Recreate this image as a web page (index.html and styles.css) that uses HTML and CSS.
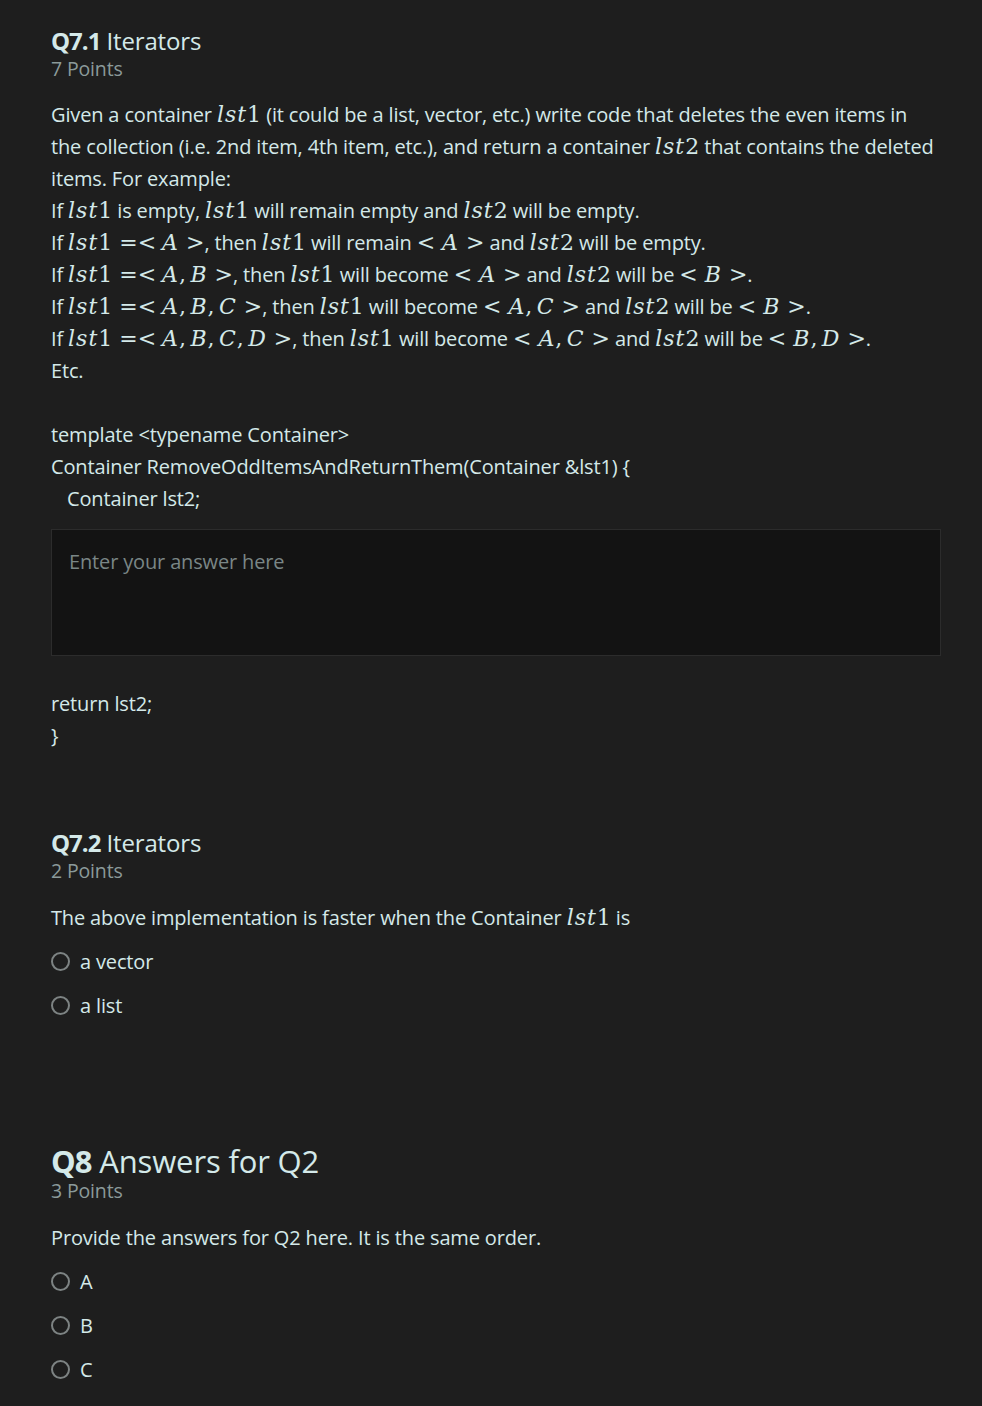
FILE: index.html
```html
<!DOCTYPE html>
<html>
<head>
<meta charset="utf-8">
<link rel="stylesheet" href="styles.css">
</head>
<body>
<main class="page">
  <section class="q q71">
    <h2 class="qtitle"><b>Q7.1</b> Iterators</h2>
    <div class="points">7 Points</div>
    <div class="body">
      <p class="line">Given a container <span class="m"><i>lst</i>1</span> (it could be a list, vector, etc.) write code that deletes the even items in the collection (i.e. 2nd item, 4th item, etc.), and return a container <span class="m"><i>lst</i>2</span> that contains the deleted items. For example:<br>
      If <span class="m"><i>lst</i>1</span> is empty, <span class="m"><i>lst</i>1</span> will remain empty and <span class="m"><i>lst</i>2</span> will be empty.<br>
      If <span class="m"><i>lst</i>1<span class="rel">=&lt;</span><i>A</i><span class="rr">&gt;</span></span>, then <span class="m"><i>lst</i>1</span> will remain <span class="m"><span class="rl">&lt;</span><i>A</i><span class="rr">&gt;</span></span> and <span class="m"><i>lst</i>2</span> will be empty.<br>
      If <span class="m"><i>lst</i>1<span class="rel">=&lt;</span><i>A</i>,&thinsp;<i>B</i><span class="rr">&gt;</span></span>, then <span class="m"><i>lst</i>1</span> will become <span class="m"><span class="rl">&lt;</span><i>A</i><span class="rr">&gt;</span></span> and <span class="m"><i>lst</i>2</span> will be <span class="m"><span class="rl">&lt;</span><i>B</i><span class="rr">&gt;</span></span>.<br>
      If <span class="m"><i>lst</i>1<span class="rel">=&lt;</span><i>A</i>,&thinsp;<i>B</i>,&thinsp;<i>C</i><span class="rr">&gt;</span></span>, then <span class="m"><i>lst</i>1</span> will become <span class="m"><span class="rl">&lt;</span><i>A</i>,&thinsp;<i>C</i><span class="rr">&gt;</span></span> and <span class="m"><i>lst</i>2</span> will be <span class="m"><span class="rl">&lt;</span><i>B</i><span class="rr">&gt;</span></span>.<br>
      If <span class="m"><i>lst</i>1<span class="rel">=&lt;</span><i>A</i>,&thinsp;<i>B</i>,&thinsp;<i>C</i>,&thinsp;<i>D</i><span class="rr">&gt;</span></span>, then <span class="m"><i>lst</i>1</span> will become <span class="m"><span class="rl">&lt;</span><i>A</i>,&thinsp;<i>C</i><span class="rr">&gt;</span></span> and <span class="m"><i>lst</i>2</span> will be <span class="m"><span class="rl">&lt;</span><i>B</i>,&thinsp;<i>D</i><span class="rr">&gt;</span></span>.<br>
      Etc.</p>
      <p class="code">template &lt;typename Container&gt;<br>
      Container RemoveOddItemsAndReturnThem(Container &amp;lst1) {<br>
      <span class="indent">Container lst2;</span></p>
      <div class="answer">Enter your answer here</div>
      <p class="code after">return lst2;<br>}</p>
    </div>
  </section>

  <section class="q q72">
    <h2 class="qtitle"><b>Q7.2</b> Iterators</h2>
    <div class="points">2 Points</div>
    <div class="body">
      <p class="line">The above implementation is faster when the Container <span class="m"><i>lst</i>1</span> is</p>
      <div class="options">
        <label class="opt"><span class="radio"></span>a vector</label>
        <label class="opt"><span class="radio"></span>a list</label>
      </div>
    </div>
  </section>

  <section class="q q8">
    <h2 class="qtitle big"><b>Q8</b> Answers for Q2</h2>
    <div class="points">3 Points</div>
    <div class="body">
      <p class="line">Provide the answers for Q2 here. It is the same order.</p>
      <div class="options">
        <label class="opt"><span class="radio"></span>A</label>
        <label class="opt"><span class="radio"></span>B</label>
        <label class="opt"><span class="radio"></span>C</label>
      </div>
    </div>
  </section>
</main>
</body>
</html>
```
FILE: styles.css
```css
html, body {
  margin: 0;
  padding: 0;
  background: #1e1e1e;
}
body {
  font-family: "Open Sans", "Lato", sans-serif;
  color: #d4e9e9;
  font-size: 20px;
  letter-spacing: -0.15px;
}
.page {
  width: 890px;
  padding: 25px 0 0 51px;
}
.q { margin: 0; }
.qtitle {
  margin: 0;
  font-size: 24px;
  font-weight: 400;
  line-height: 32px;
}
.qtitle b { font-weight: 700; letter-spacing: -1px; }
.qtitle.big { font-size: 31px; line-height: 36px; }
.points {
  color: #8b9a9a;
  font-size: 19.5px;
  line-height: 24px;
}
.body { margin-top: 18px; }
.q72 .body, .q8 .body { margin-top: 19px; }
.line, .code {
  margin: 0;
  line-height: 32px;
}
.code { margin-top: 32px; }
.code.after { margin-top: 32px; }
.indent { padding-left: 16px; }
.m {
  font-family: "DejaVu Serif", "Liberation Serif", serif;
  font-size: 22px;
  line-height: 1;
  white-space: nowrap;
  letter-spacing: 0;
}
.m i { font-style: italic; letter-spacing: 1px; }
.rel { margin: 0 6px 0 7px; }
.rl { margin-right: 7px; }
.rr { margin-left: 7px; }
.answer {
  margin-top: 14px;
  background: #131313;
  border: 1px solid #2c2c2c;
  color: #7a8686;
  padding: 18px 17px;
  box-sizing: border-box;
  height: 127px;
  line-height: 28px;
}
.options {
  display: flex;
  flex-direction: column;
  margin-top: 5px;
}
.opt {
  display: flex;
  align-items: center;
  height: 44px;
  gap: 10px;
}
.radio {
  width: 15px;
  height: 15px;
  border: 2px solid #7d8383;
  border-radius: 50%;
  flex: none;
}
.q72 { margin-top: 75px; }
.q8 { margin-top: 116px; }
```
